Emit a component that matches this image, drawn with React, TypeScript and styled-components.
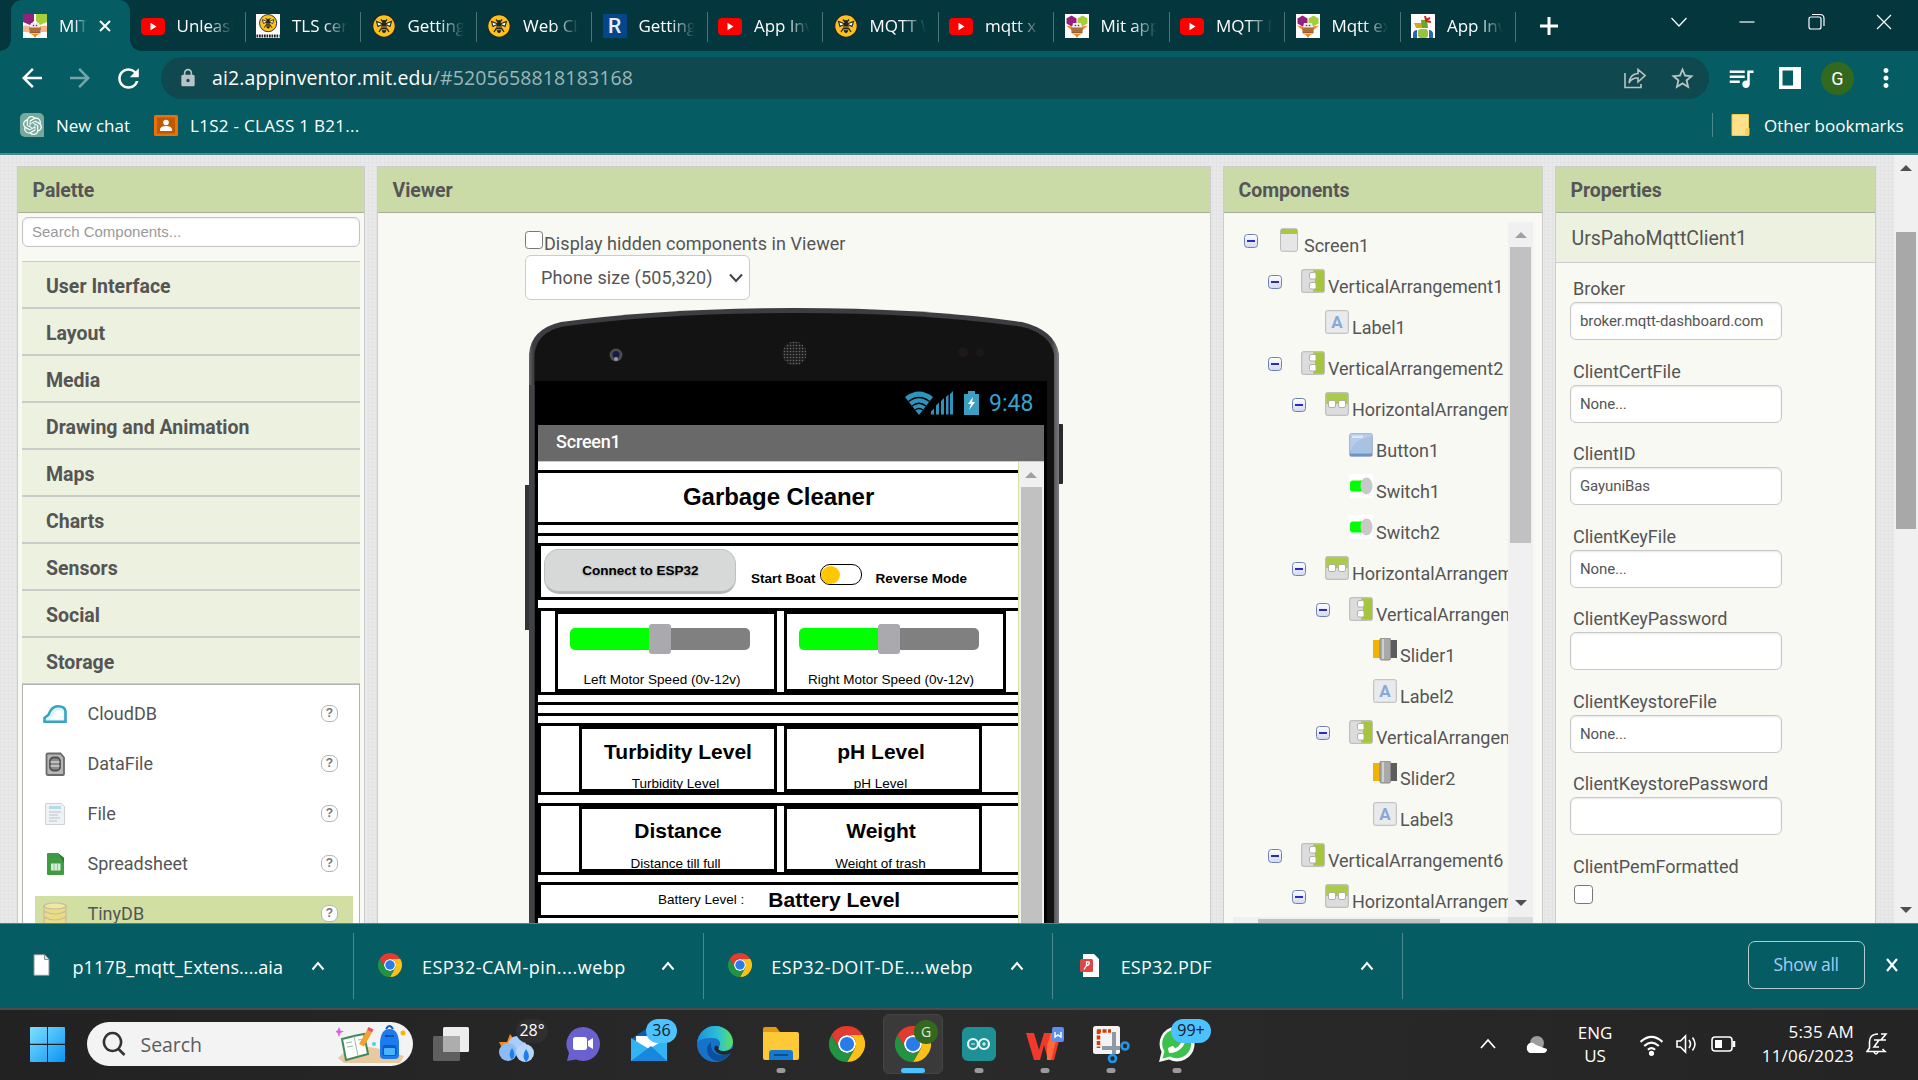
import React from 'react';
import styled, { createGlobalStyle, css } from 'styled-components';
import {
  MdArrowBack, MdArrowForward, MdRefresh, MdLock, MdStarBorder, MdQueueMusic, MdMoreVert,
} from 'react-icons/md';
import { SiOpenai } from 'react-icons/si';
import { FaPhoneAlt } from 'react-icons/fa';

const ui = `"Segoe UI", "Open Sans", "Noto Sans", sans-serif`;
const roboto = `Roboto, "Liberation Sans", sans-serif`;
const arial = `"Liberation Sans", Arial, sans-serif`;

const Global = createGlobalStyle`
  * { box-sizing: border-box; }
  body { margin: 0; overflow: hidden; background: #055c63; }
  svg { display: block; flex: none; }
`;

const Desktop = styled.div`
  width: 1918px; height: 1080px; overflow: hidden;
  display: flex; flex-direction: column; font-family: ${ui};
`;

/* ---------- browser chrome ---------- */
const TabStrip = styled.div`
  height: 51px; background: #03363d; display: flex; flex: none; padding-left: 11px;
`;
const ActiveTab = styled.div`
  position: relative; width: 118.6px; background: #055c63; border-radius: 11px 11px 0 0;
  display: flex; align-items: center; padding-left: 12px; color: #fff;
  &::before, &::after { content: ''; position: absolute; bottom: 0; width: 11px; height: 11px; }
  &::before { left: -11px; background: radial-gradient(circle at 0 0, transparent 10.5px, #055c63 11px); }
  &::after { right: -11px; background: radial-gradient(circle at 100% 0, transparent 10.5px, #055c63 11px); }
`;
const Tab = styled.div`
  position: relative; width: 115.5px; display: flex; align-items: center; padding-left: 11px; color: #fff; flex: none;
  &::after { content: ''; position: absolute; right: -0.5px; top: 12px; width: 1px; height: 30px; background: #4e7377; }
`;
const TabTitle = styled.span<{ $w: number }>`
  margin-left: 12px; width: ${p => p.$w}px; overflow: hidden; white-space: nowrap;
  font-size: 17px; line-height: 26px; letter-spacing: -0.1px;
  mask-image: linear-gradient(90deg, #000 55%, transparent 100%);
`;
const NewTab = styled.div`width: 66px; display: flex; align-items: center; justify-content: center;`;
const WindowButtons = styled.div`
  margin-left: auto; display: flex; height: 44px; align-items: center; gap: 44.5px; padding-right: 22px;
`;

const Toolbar = styled.div`
  height: 48px; background: #055c63; display: flex; align-items: flex-end; padding-left: 20px; flex: none; color: #fff;
`;
const ToolIcon = styled.div<{ $w?: number; $ml?: number; $dim?: boolean }>`
  width: ${p => p.$w ?? 24}px; height: 42px; margin-left: ${p => p.$ml ?? 0}px; flex: none;
  display: flex; align-items: center; justify-content: center; opacity: ${p => (p.$dim ? 0.45 : 1)};
`;
const Omnibox = styled.div`
  margin-left: 21px; width: 1548px; height: 42px; border-radius: 21px; background: #0f484f; flex: none;
  display: flex; align-items: center; padding: 0 15px 0 19px; color: #b9c3c6;
`;
const Url = styled.span`
  margin-left: 17px; font-size: 19.5px; line-height: 42px; color: #9db6b9; white-space: nowrap; margin-right: auto;
  letter-spacing: 0.12px;
  b { font-weight: 400; color: #fff; }
`;
const Avatar = styled.div`
  margin: 0 0 4px 20.5px; width: 33px; height: 33px; border-radius: 50%; background: #33691e; flex: none;
  display: flex; align-items: center; justify-content: center; font: 18px/1 ${roboto};
`;
const Bookmarks = styled.div`
  height: 56px; background: #055c63; border-bottom: 2px solid #4a888c; flex: none; color: #fff;
  display: flex; align-items: center; padding: 0 0 2px 20px;
`;
const BookmarkText = styled.span<{ $ml: number; $mr?: number; $ls?: number }>`
  margin-left: ${p => p.$ml}px; margin-right: ${p => p.$mr ?? 0}px; font-size: 17px; white-space: nowrap;
  letter-spacing: ${p => p.$ls ?? 0}px;
`;
const ChatTile = styled.div`
  width: 24px; height: 24px; background: #75a99c; border-radius: 5px 5px 0 5px; display: flex; align-items: center; justify-content: center;
`;
const OtherBookmarks = styled.div`
  margin-left: auto; height: 24px; border-left: 1px solid #4a888c; width: 206px; display: flex; align-items: center; padding-left: 18px;
`;

/* ---------- page ---------- */
const Page = styled.div`
  height: 768px; flex: none; display: flex; overflow: hidden; background-color: #e9e9e9;
  background-image:
    repeating-linear-gradient(0deg, rgba(0,0,0,.022) 0 1px, transparent 1px 4px),
    repeating-linear-gradient(90deg, rgba(0,0,0,.022) 0 1px, transparent 1px 4px);
`;
const Columns = styled.div`
  flex: 1; display: flex; gap: 12px; padding: 11px 0 0 17px;
`;
const Panel = styled.section<{ $w: number }>`
  width: ${p => p.$w}px; height: 800px; flex: none; background: #f8f9f3; border: 1px solid #ccc;
  display: flex; flex-direction: column; font-family: ${roboto}; color: #555;
`;
const PanelHeader = styled.h2`
  margin: 0; height: 46px; flex: none; background: #cbdba8; border-bottom: 1px solid #a9ae9c; padding: 1px 0 0 14.5px;
  font-size: 19.5px; font-weight: 700; line-height: 46px; letter-spacing: -0.07px;
`;
const SearchBox = styled.div`
  margin: 4px 4px 13.5px; height: 30px; border: 1px solid #c4c4c4; border-radius: 6px; background: #fff; flex: none;
  box-shadow: inset 0 1px 2px rgba(0,0,0,.08); font: 15px/27px ${arial}; color: #999; padding-left: 9px;
`;
const Categories = styled.div`margin: 0 4px; border-top: 1px solid #ccc; flex: none;`;
const Category = styled.div`
  height: 47px; background: #edf1df; border-bottom: 2px solid #cacccb; padding-left: 24px;
  font-size: 19.5px; font-weight: 700; line-height: 49px;
`;
const Drawer = styled.div`
  margin: -1px 4px 0; flex: 1; background: #fff; border: 1px solid #b4b4b4; padding: 11px 6px 0 12px;
`;
const DrawerItem = styled.div<{ $on?: boolean }>`
  height: 36px; margin-bottom: 14px; display: flex; align-items: center; padding: 0 15px 0 8px; font-size: 18px;
  ${p => p.$on && css`background: #d2dfa2;`}
  span { margin-left: 20.5px; margin-right: auto; }
`;
const Help = styled.i`
  width: 17px; height: 17px; border: 1.5px solid #b5b5b5; border-radius: 7px; background: #fff; font: bold 12px/14px ${arial};
  color: #777; text-align: center;
`;

/* ---------- viewer ---------- */
const ViewerBody = styled.div`padding-left: 147px; flex: 1;`;
const HiddenToggle = styled.label`
  height: 42px; padding-top: 18px; display: flex; font-size: 18px; line-height: 25px; gap: 1px; white-space: nowrap;
  span { letter-spacing: 0.06px; }
`;
const Box = styled.i`
  width: 18px; height: 18px; border: 1.5px solid #767676; border-radius: 3.5px; background: #fff; flex: none;
`;
const SizeSelect = styled.div`
  width: 225px; height: 45px; border: 1px solid #ccc; border-radius: 6px; background: #fff; display: flex; align-items: center;
  font-size: 18px; padding: 0 5px 0 15px; justify-content: space-between; letter-spacing: 0.15px;
`;
const Phone = styled.div`
  position: relative; margin-top: 8px; width: 538px; height: 640px; padding: 73px 0 0 10px;
`;
const PhoneBody = styled.svg`position: absolute; left: 0; top: 0;`;
const StatusBar = styled.div`
  position: relative; width: 512px; height: 44px; background: #000; display: flex; align-items: center; color: #33a3cd;
  padding: 0 0 0 370px; font-size: 23px;
`;
const Clock = styled.span`margin-left: 10px; line-height: 44px; padding-top: 1px;`;
const Glass = styled.div`position: relative; margin-left: 3px; width: 506px; background: #fff;`;
const AppTitle = styled.div`
  height: 37px; background: #696969; border-bottom: 1px solid #ccc; color: #fff; font-size: 18px; font-weight: 500;
  line-height: 34px; padding-left: 18px; letter-spacing: -0.2px;
`;
const GlassBody = styled.div`display: flex; height: 500px;`;
const AppScreen = styled.div`
  width: 480.5px; padding-top: 8px; font-family: ${arial}; color: #000; display: flex; flex-direction: column;
  border-right: 1px solid #d4dfa8;
`;
const AppHeading = styled.div`
  height: 55px; border: solid #000; border-width: 3px 0; font-size: 24px; font-weight: 700; line-height: 47px;
  padding-left: 145px; margin-bottom: 8px; flex: none; letter-spacing: -0.06px;
`;
const Rule = styled.div<{ $after: number }>`height: 3px; background: #000; margin-bottom: ${p => p.$after}px; flex: none;`;
const AppRow = styled.div<{ $h: number; $after: number; $pad: number; $gap?: number }>`
  height: ${p => p.$h}px; margin-bottom: ${p => p.$after}px; border: solid #000; border-width: 3px 0 3px 3px; flex: none;
  display: flex; padding-left: ${p => p.$pad}px; gap: ${p => p.$gap ?? 0}px;
`;
const ConnectButton = styled.div`
  width: 192px; height: 45px; margin-top: 3px; border-radius: 15px; background: #d6d9d8; border: 1px solid #bfc1c0; border-bottom: 3px solid #b5b7b6;
  font-size: 13.5px; font-weight: 700; text-align: center; line-height: 41px; text-shadow: 0 1px 2px rgba(0,0,0,.25); padding-left: 1px;
`;
const SwitchLabel = styled.span<{ $ml: number }>`
  margin-left: ${p => p.$ml}px; font-size: 13.5px; font-weight: 700; line-height: 16px; margin-top: 25px; white-space: nowrap;
`;
const Toggle = styled.div`
  width: 42px; height: 21px; margin: 18px 0 0 4px; border: 1.5px solid #000; border-radius: 10px; padding: 0.5px;
  &::before { content: ''; display: block; width: 19px; height: 18px; border-radius: 50%; background: #ffc700; }
`;
const Cell = styled.div<{ $w: number }>`
  width: ${p => p.$w}px; border: 3px solid #000; overflow: hidden; flex: none; display: flex; flex-direction: column; align-items: center;
`;
const Track = styled.div`
  margin: 14px 30px 0 12px; align-self: flex-start; width: 180px; height: 22px; border-radius: 5px; flex: none;
  background: linear-gradient(90deg, #0f0 45%, #808080 45%); display: flex; align-items: center; padding-left: 79px;
  &::before { content: ''; width: 22px; height: 30px; flex: none; border-radius: 3px; background: #a9a9ae; }
`;
const SmallText = styled.span<{ $mt: number; $shift?: number }>`
  font-size: 13.5px; line-height: 16px; margin-top: ${p => p.$mt}px; white-space: nowrap; padding-right: ${p => p.$shift ?? 0}px;
`;
const BigText = styled.span<{ $mt: number; $shift?: number }>`
  font-size: 21px; line-height: 24px; font-weight: 700; margin-top: ${p => p.$mt}px; white-space: nowrap; padding-right: ${p => p.$shift ?? 0}px;
`;

/* ---------- scroll bars ---------- */
const Scroll = styled.div<{ $w: number; $thumb: number; $color: string; $tw: number }>`
  width: ${p => p.$w}px; background: #f0f0f0; display: flex; flex-direction: column; align-items: center; flex: none;
  i { width: ${p => p.$tw}px; height: ${p => p.$thumb}px; background: ${p => p.$color}; flex: none; }
`;
const Arrow = styled.b<{ $h: number; $pt: number; $c: string; $down?: boolean }>`
  height: ${p => p.$h}px; padding-top: ${p => p.$pt}px; flex: none;
  &::before {
    content: ''; display: block; border: 6px solid transparent;
    ${p => (p.$down ? `border-top-color: ${p.$c}; border-bottom: 0;` : `border-bottom-color: ${p.$c}; border-top: 0;`)}
  }
`;
const Spring = styled.span`flex: 1;`;

/* ---------- component tree ---------- */
const TreeFrame = styled.div`margin: 9px 0 0 9px; height: 710px; flex: none; display: flex; flex-direction: column;`;
const TreeTop = styled.div`display: flex; height: 695px; flex: none;`;
const Tree = styled.div`width: 275px; overflow: hidden; padding-top: 6px;`;
const TreeRow = styled.div<{ $level: number }>`
  height: 41px; padding-left: ${p => 11 + p.$level * 24}px; display: flex; white-space: nowrap; font-size: 18px;
`;
const Minus = styled.div<{ $hide: boolean }>`
  width: 14px; height: 14px; margin: 6px 19px 0 0; border: 1.5px solid #6d80bd; border-radius: 3.5px; flex: none;
  background: linear-gradient(#fff, #d5d9ec); visibility: ${p => (p.$hide ? 'hidden' : 'visible')};
  &::before { content: ''; display: block; margin: 5px 2px 0; height: 2px; background: #2a2ac8; }
`;
const TreeName = styled.span`margin-left: 3px; line-height: 21px; padding-top: 7px;`;
const HScroll = styled.div`
  display: flex; height: 25px; width: 300px; background: linear-gradient(90deg, #f0f0f0 275px, #dcdcdc 275px); padding: 2px 0 2px 25px;
  i { width: 182px; background: #c1c1c1; }
`;

/* ---------- properties ---------- */
const Selected = styled.div`
  height: 50px; background: #edf1df; border-bottom: 1px solid #ccc; font-size: 19.5px; line-height: 51px; padding-left: 15.5px; flex: none;
`;
const Fields = styled.div`padding: 15px 0 0 14px;`;
const Field = styled.div`height: 82.5px;`;
const FieldLabel = styled.div`font-size: 18px; line-height: 22px; height: 24px; padding-left: 3px;`;
const Input = styled.div`
  width: 212px; height: 38px; border: 1px solid #c8c8c8; border-radius: 6px; background: #fff; font-size: 15px; line-height: 36px;
  padding-left: 9px; box-shadow: inset 0 1px 2px rgba(0,0,0,.1); letter-spacing: -0.1px;
`;
const PemBox = styled(Box)`display: block; margin: 5px 0 0 4px; width: 19px; height: 19px;`;

/* ---------- downloads shelf ---------- */
const Shelf = styled.div`
  height: 85px; flex: none; background: #055c63; border-top: 1px solid #4a888c; display: flex; color: #fff; padding-top: 9px; padding-left: 5px;
`;
const Download = styled.div`
  width: 349.4px; height: 66px; border-right: 1px solid #4a888c; display: flex; align-items: center; padding: 0 28px 0 24px; flex: none;
  font-size: 18px; white-space: nowrap;
`;
const FileSlot = styled.div`width: 24px; display: flex; justify-content: center; flex: none; margin-bottom: 2px;`;
const FileName = styled.span<{ $ls: number }>`margin: 1px auto 0 19.5px; letter-spacing: ${p => p.$ls}px;`;
const ShowAll = styled.div`
  margin: 8px 0 0 345px; width: 117px; height: 48px; border: 1px solid #b6cbd0; border-radius: 7px; color: #a6ccf8;
  font-size: 17.5px; font-weight: 500; line-height: 45px; text-align: center; letter-spacing: -0.3px; margin-right: 20px;
`;

/* ---------- taskbar ---------- */
const Taskbar = styled.div`
  flex: none; height: 72px; background: linear-gradient(90deg, #222 0, #2a2a2a 50%, #242424 100%); border-top: 2px solid #4b4b4b; display: flex; color: #fff;
  align-items: center; padding: 0 30px 2px 30px;
`;
const SearchPill = styled.div`
  margin: 0 8px 0 22px; width: 326px; height: 44px; border-radius: 22px; background: #f3f3f3; color: #5c5c5c; display: flex; align-items: center;
  padding: 0 5px 0 15px; font-size: 19.5px; flex: none;
  span { margin: 1px auto 0 14.5px; letter-spacing: -0.05px; }
`;
const TaskButton = styled.div<{ $active?: boolean }>`
  position: relative; width: 60px; height: 60px; margin-right: 6px; flex: none; border-radius: 6px;
  display: flex; align-items: center; justify-content: center;
  ${p => p.$active && css`background: #3a3a3a; border: 1px solid #454545;`}
`;
const Running = styled.i<{ $active?: boolean }>`
  position: absolute; bottom: ${p => (p.$active ? 0 : 1)}px; left: 50%; transform: translateX(-50%);
  width: ${p => (p.$active ? 24 : 9)}px; height: 5px; border-radius: 3px; background: ${p => (p.$active ? '#4cc2ff' : '#9a9a9a')};
`;
const Badge = styled.span<{ $bg: string; $fg: string; $l: number; $w: number; $s?: number }>`
  position: absolute; top: 5px; left: ${p => p.$l}px; width: ${p => p.$w}px; height: 24px; border-radius: 12px;
  background: ${p => p.$bg}; color: ${p => p.$fg}; font-size: ${p => p.$s ?? 16}px; line-height: 23px; text-align: center;
`;
const Tray = styled.div`
  margin-left: auto; display: flex; align-items: center; font-size: 17px; line-height: 23px;
`;
const Lang = styled.div`width: 44px; text-align: center; margin: 0 22px 0 23px; letter-spacing: -0.1px;`;
const DateTime = styled.div`
  width: 100px; text-align: right; margin-left: 18px; margin-right: 12px; letter-spacing: 0.2px; white-space: nowrap; line-height: 24px;
`;
const Cloud = styled.svg`margin-left: 27px;`;
const Volume = styled.div`margin: 0 5px 0 6px;`;

/* ---------- drawings ---------- */
const YouTube = () => (
  <svg width="24" height="24" viewBox="0 0 24 24"><rect y="4" width="24" height="17" rx="4" fill="#f00" /><path d="M9.5 8.8v7.4l6-3.7z" fill="#fff" /></svg>
);
const BeeMark = () => (
  <g>
    <circle cx="12" cy="12" r="11.3" fill="#fbc21b" stroke="#20242a" strokeWidth="1.2" />
    <path d="M9 5.500l2 2.500M15 5.500l-2 2.500M7 18l2.500-4M17 18l-2.500-4" stroke="#20242a" strokeWidth="1.300" fill="none" />
    <path d="M11 10 4.500 7.500l1.500 5zM13 10l6.500-2.500-1.500 5z" fill="#fff" stroke="#20242a" strokeWidth="1.100" />
    <ellipse cx="12" cy="13.500" rx="2.600" ry="5.500" fill="#20242a" /><circle cx="12" cy="8" r="1.900" fill="#20242a" />
    <path d="M9.800 13h4.400M10 15.700h4" stroke="#fbc21b" strokeWidth=".8" />
  </g>
);
const Hive = () => <svg width="24" height="24" viewBox="0 0 24 24"><BeeMark /></svg>;
const HiveWhite = () => (
  <svg width="24" height="24" viewBox="0 0 24 24">
    <rect width="24" height="24" fill="#fff" />
    <g transform="translate(3 0) scale(.76)"><BeeMark /></g>
    <path d="M.5 22h23" stroke="#222" strokeWidth="3" strokeDasharray="1.7 .8" />
  </svg>
);
const Inventor = ({ orange }: { orange?: boolean }) => (
  <svg width="24" height="24" viewBox="0 0 24 24">
    <rect width="24" height="24" fill="#fff" />
    <path d={orange ? 'M0 0h11v7l-4 4-7-3z' : 'M1.500 4.500 6.500 1.500l5 3v5l-5 3-5-3z'} fill="#93227f" />
    <path d={orange ? 'M13 0h11v8l-7 3-4-4z' : 'M12.500 4.500l5-3 5 3v5l-5 3-5-3z'} fill="#a6ce39" />
    <path d="M1 11.500l6 1v4zM23 11.500l-6 1v4z" fill="#f58a33" />
    {orange && <path d="M0 12h6v6H0zM18 12h6v6h-6z" fill="#f9b586" />}
    <path d="M8 9h8l1 4.500H7z" fill="#f1ebee" /><path d="M6.500 13.500h11v5.500h-11z" fill="#9a5b2b" />
    <path d="M6.500 15h11M6.500 17h11" stroke="#c98d51" strokeWidth=".8" />
    <path d="M6 19.500h12l-4 1.500-2 3-2-3z" fill="#f58220" />
    <circle cx="10.500" cy="11.500" r=".8" fill="#444" /><circle cx="13.500" cy="11.500" r=".8" fill="#444" />
  </svg>
);
const RTile = styled.div`
  width: 24px; height: 24px; background: #04468c; color: #e8eef5; font: 500 21px/25px ${roboto}; text-align: center;
`;
const Robot = () => (
  <svg width="24" height="24" viewBox="0 0 24 24">
    <rect width="24" height="24" fill="#fff" />
    <path d="M3 9h9v5H5z" fill="#d9a514" /><path d="M10 6h6l1 8h-6z" fill="#6aa52c" />
    <path d="M14 2l1 4 4-2M15 7l5 1" stroke="#d0202a" strokeWidth="2" fill="none" />
    <rect x="7" y="15" width="10" height="9" rx="3" fill="#97c23c" /><path d="M2 24v-5q1-3 4-3v8zM22 24v-5q-1-3-4-3v8z" fill="#2a62b5" />
  </svg>
);
const Chrome = ({ size }: { size: number }) => (
  <svg width={size} height={size} viewBox="0 0 48 48">
    <circle cx="24" cy="24" r="12" fill="#fff" />
    <path fill="#e33b2e" d="M24,12H44.7812a23.9939,23.9939,0,0,0-41.5639.0029L13.6079,30l.0093-.0024A11.9852,11.9852,0,0,1,24,12Z" />
    <path fill="#fbc116" d="M34.3913,30.0029,24.0007,48A23.994,23.994,0,0,0,44.78,12.0031H23.9989l-.0025.0093A11.985,11.985,0,0,1,34.3913,30.0029Z" />
    <path fill="#229342" d="M13.6086,30.0031,3.218,12.006A23.994,23.994,0,0,0,24.0025,48L34.3931,30.0029l-.0067-.0068a11.9852,11.9852,0,0,1-20.7778.007Z" />
    <circle cx="24" cy="24" r="9.5" fill="#2a7bea" />
  </svg>
);
const Stroke = ({ w, h, d, s = 1.5, c = '#fff' }: { w: number; h: number; d: string; s?: number; c?: string }) => (
  <svg width={w} height={h} viewBox={`0 0 ${w} ${h}`} fill="none" stroke={c} strokeWidth={s}><path d={d} /></svg>
);

const drawerIcons: Record<string, React.ReactNode> = {
  CloudDB: <g><path d="M1.500 19.800v-4l4-3q3-8.500 9.500-8.500 7 0 7.500 5v10.500z" fill="#d8f6fd" stroke="#3aa3c4" strokeWidth="2.600" /><path d="M7 17.500q0-3 3-3 1-6 6-6 4 0 4.500 4v5z" fill="#fff" /></g>,
  DataFile: <g stroke="#6a6a6a" strokeWidth="1.800"><path d="M3.500 3q0-1.500 1.500-1.500h12.500l3.500 4V22q0 1-1 1H5q-1.500 0-1.500-1.500z" fill="#b5b5b5" /><rect x="7" y="5.500" width="10" height="13" rx="3.500" fill="#8c8c8c" stroke="#505050" /><path d="M7.500 10h9M7.500 14h9" stroke="#cfcfcf" strokeWidth="1.300" /></g>,
  File: <g><path d="M2.500 1.500h16l3 3v18h-19z" fill="#eef2f5" stroke="#ccd2d5" /><path d="M6 5.500h12" stroke="#b5dbe6" strokeWidth="3" /><path d="M6 10h12M6 13h9M6 16h11M6 19h8" stroke="#d3dade" strokeWidth="2" /></g>,
  Spreadsheet: <g><path d="M4 1.500q0-.5 1-.5h10l6 5v16q0 1-1 1H5q-1 0-1-1z" fill="#3f9c42" /><path d="M15 1l6 5v5z" fill="#2a7a2e" /><rect x="8" y="11.500" width="9.500" height="7" fill="#d6ecd6" /><path d="M11 11.500v7M14.500 11.500v7" stroke="#8fc890" /></g>,
  TinyDB: <g fill="#e8dd85" stroke="#c9bb9c" strokeWidth="1.2"><path d="M1 16v5q11 6 22 0v-5z" /><path d="M1 10v5q11 6 22 0v-5z" /><path d="M1 4v5q11 6 22 0V4z" /><ellipse cx="12" cy="4" rx="11" ry="3" fill="#efe7a5" /></g>,
};

type Kind = 'screen' | 'v' | 'h' | 'label' | 'button' | 'switch' | 'slider';
const treeIcons: Record<Kind, React.ReactNode> = {
  screen: <g><rect x="3.500" y=".7" width="17" height="22.600" rx="2" fill="#e6e6e6" stroke="#bbb" /><path d="M4 1h16v5H4z" fill="#a9c93d" /></g>,
  v: <g><rect x=".7" y=".7" width="22.600" height="22.600" rx="1.500" fill="#dcdcdc" stroke="#b3b3b3" /><path d="M12 1.200h11v21.600H12l2-11z" fill="#a5c63b" /><g fill="#fff" stroke="#b0b0a8"><rect x="8.500" y="3.500" width="6.500" height="6.500" rx="1.500" /><rect x="8.500" y="13.500" width="6.500" height="6.500" rx="1.500" /></g></g>,
  h: <g><rect x=".7" y=".7" width="22.600" height="22.600" rx="1.500" fill="#dcdcdc" stroke="#b3b3b3" /><path d="M1.200 1.200h21.600V12H1.200z" fill="#a9cb45" /><g fill="#fff" stroke="#b0b0a8"><rect x="3.500" y="8.500" width="7" height="7" rx="1.500" /><rect x="13.500" y="8.500" width="7" height="7" rx="1.500" /></g></g>,
  label: <g><rect x=".7" y=".7" width="22.600" height="22.600" rx="1.500" fill="#e9eaec" stroke="#b9b9b9" /><text x="12" y="18" fontSize="17" fontWeight="700" textAnchor="middle" fill="#86a9da" fontFamily="Roboto">A</text></g>,
  button: <g><rect x=".7" y=".7" width="22.600" height="22.600" rx="1.500" fill="#a8c2e4" stroke="#9fadc4" /><path d="M1.200 1.200h21.600v2Q6 6 2 17h-.8z" fill="#b7cdea" /><path d="M3 2.500h11v2.500H3z" fill="#dce8f6" /><path d="M1 21.800h22" stroke="#6f93c8" strokeWidth="2.600" /></g>,
  switch: <g><rect width="24" height="24" fill="#fff" /><rect x="1" y="6.500" width="16" height="11" rx="3" fill="#0f0" /><ellipse cx="17.500" cy="12" rx="6" ry="8.500" fill="#c9c9c9" /></g>,
  slider: <g><path d="M0 2h8v18H0z" fill="#f0b400" /><path d="M16 2h8v18h-8z" fill="#5d5d5d" /><rect x="7" y="0" width="10.500" height="22" rx="1.500" fill="#a9a9a9" stroke="#888" /><path d="M10 1v20" stroke="#d0d0d0" strokeWidth="2" /></g>,
};
const tree: [string, number, Kind][] = [
  ['Screen1', 0, 'screen'], ['VerticalArrangement1', 1, 'v'], ['Label1', 2, 'label'], ['VerticalArrangement2', 1, 'v'],
  ['HorizontalArrangement1', 2, 'h'], ['Button1', 3, 'button'], ['Switch1', 3, 'switch'], ['Switch2', 3, 'switch'],
  ['HorizontalArrangement2', 2, 'h'], ['VerticalArrangement3', 3, 'v'], ['Slider1', 4, 'slider'], ['Label2', 4, 'label'],
  ['VerticalArrangement4', 3, 'v'], ['Slider2', 4, 'slider'], ['Label3', 4, 'label'], ['VerticalArrangement6', 1, 'v'],
  ['HorizontalArrangement3', 2, 'h'],
];
const tabs: [React.ReactNode, string][] = [
  [<YouTube />, 'Unleash'], [<HiveWhite />, 'TLS cert'], [<Hive />, 'Getting S'], [<Hive />, 'Web Clie'], [<RTile>R</RTile>, 'Getting S'],
  [<YouTube />, 'App Inve'], [<Hive />, 'MQTT W'], [<YouTube />, 'mqtt x'], [<Inventor />, 'Mit app i'], [<YouTube />, 'MQTT P'],
  [<Inventor />, 'Mqtt ext'], [<Robot />, 'App Inve'],
];
const categories = ['User Interface', 'Layout', 'Media', 'Drawing and Animation', 'Maps', 'Charts', 'Sensors', 'Social', 'Storage'];
const fields: [string, string][] = [
  ['Broker', 'broker.mqtt-dashboard.com'], ['ClientCertFile', 'None...'], ['ClientID', 'GayuniBas'], ['ClientKeyFile', 'None...'],
  ['ClientKeyPassword', ''], ['ClientKeystoreFile', 'None...'], ['ClientKeystorePassword', ''],
];

const PhoneFrame = () => (
  <PhoneBody width="538" height="640" viewBox="0 0 538 640">
    <defs>
      <pattern id="mesh" width="3" height="3" patternUnits="userSpaceOnUse"><circle cx="1.500" cy="1.500" r=".8" fill="#666" /></pattern>
      <linearGradient id="rim" x1="0" x2="1"><stop offset="0" stopColor="#66676b" /><stop offset=".008" stopColor="#3c3d40" /><stop offset=".985" stopColor="#3c3d40" /><stop offset="1" stopColor="#7a7b80" /></linearGradient>
    </defs>
    <rect x="0" y="177" width="6" height="145" fill="#333437" />
    <rect x="532" y="116" width="6" height="60" rx="1" fill="#2a2a2c" />
    <path d="M4 640V46Q6 21 36 14Q140 0 269 0Q400 0 497 14Q530 22 534 46V640z" fill="url(#rim)" />
    <path d="M9.500 640V46Q12 24 38 18.500Q140 5 269 5Q400 5 495 18.500Q525 25 529 46V640z" fill="#131313" />
    <rect x="4" y="77" width="5.500" height="563" fill="#414246" />
    <rect x="10" y="73" width="3" height="567" fill="#000" /><rect x="519" y="73" width="3" height="567" fill="#000" />
    <circle cx="91" cy="47" r="6.500" fill="#4b4b50" /><circle cx="91" cy="46.500" r="3.500" fill="#191948" /><circle cx="91" cy="51" r="2" fill="#999" />
    <circle cx="269.500" cy="45.500" r="12" fill="#1d1d1d" /><circle cx="269.500" cy="45.500" r="12" fill="url(#mesh)" />
    <circle cx="438" cy="44.500" r="5" fill="#1e1819" /><circle cx="455" cy="44.500" r="4" fill="#1c1819" />
  </PhoneBody>
);

const Wifi = ({ size, c }: { size: number; c: string }) => (
  <svg width={size} height={size} viewBox="0 0 24 24" fill="none" stroke={c} strokeWidth="2">
    <path d="M1.500 9.500q10.500-9.500 21 0M5 13.500q7-6.500 14 0M8.500 17q3.500-3 7 0" /><circle cx="12" cy="20.500" r="1.500" fill={c} />
  </svg>
);

const Level = ({ title, sub, top, shift = 0 }: { title: string; sub: string; top: number; shift?: number }) => (
  <Cell $w={198}><BigText $mt={top} $shift={shift}>{title}</BigText><SmallText $mt={23 - top} $shift={5}>{sub}</SmallText></Cell>
);
const Motor = ({ label }: { label: string }) => (
  <Cell $w={222}><Track /><SmallText $mt={22} $shift={8}>{label}</SmallText></Cell>
);

const caret = <Stroke w={14} h={10} d="M1.500 8.500 7 2l5.500 6.500" s={2} />;

export default function App() {
  return (
    <Desktop>
      <Global />
      <TabStrip>
        <ActiveTab>
          <Inventor orange />
          <TabTitle $w={28}>MIT A</TabTitle>
          <Stroke w={36} h={14} d="M13 2l10 10M23 2 13 12" s={2} />
        </ActiveTab>
        {tabs.map(([icon, name], i) => <Tab key={i}>{icon}<TabTitle $w={56}>{name}</TabTitle></Tab>)}
        <NewTab><Stroke w={18} h={18} d="M9 0v18M0 9h18" s={3} /></NewTab>
        <WindowButtons>
          <Stroke w={24} h={16} d="M4.500 4 12 12l7.500-8" s={1.2} />
          <Stroke w={24} h={16} d="M4.500 8h15" s={1.2} />
          <Stroke w={24} h={18} d="M5 6q0-2 2-2h8q2 0 2 2v8q0 2-2 2H7q-2 0-2-2zM8 1.500h8q4 0 4 4V13" s={1.2} />
          <Stroke w={24} h={18} d="M5 2l14 14M19 2 5 16" s={1.2} />
        </WindowButtons>
      </TabStrip>
      <Toolbar>
        <ToolIcon><MdArrowBack size={30} /></ToolIcon>
        <ToolIcon $ml={24} $dim><MdArrowForward size={30} /></ToolIcon>
        <ToolIcon $ml={24}><MdRefresh size={31} /></ToolIcon>
        <Omnibox>
          <ToolIcon $w={15}><MdLock size={20} /></ToolIcon>
          <Url><b>ai2.appinventor.mit.edu</b>/#5205658818183168</Url>
          <Stroke w={22} h={22} d="M1 6v14.500h16V17M5 16q1-9 9-9.500V2.500l7 6-7 6.500v-4q-6-.5-9 5z" s={1.6} c="#b9c3c6" />
          <ToolIcon $ml={24}><MdStarBorder size={27} /></ToolIcon>
        </Omnibox>
        <ToolIcon $ml={20}><MdQueueMusic size={30} /></ToolIcon>
        <ToolIcon $ml={25.5} $w={22}>
          <svg width="22" height="22" viewBox="0 0 22 22"><path d="M0 0h22v22H0zM3.500 3.500v15H14v-15z" fill="#fff" fillRule="evenodd" /></svg>
        </ToolIcon>
        <Avatar>G</Avatar>
        <ToolIcon $ml={19.5}><MdMoreVert size={30} /></ToolIcon>
      </Toolbar>
      <Bookmarks>
        <ChatTile><SiOpenai size={19} /></ChatTile>
        <BookmarkText $ml={12} $mr={24}>New chat</BookmarkText>
        <svg width="24" height="21" viewBox="0 0 24 21"><rect width="24" height="21" rx="1.500" fill="#e8710a" /><rect x="3" y="2.500" width="18" height="16" fill="#bf5a02" /><circle cx="12" cy="7.500" r="2.800" fill="#fff" /><path d="M6 16v-2q1-3 6-3t6 3v2z" fill="#fff" /></svg>
        <BookmarkText $ml={12} $ls={0.3}>L1S2 - CLASS 1 B21...</BookmarkText>
        <OtherBookmarks>
          <svg width="20" height="22" viewBox="0 0 20 22"><path d="M1 .5h16.500v21H1z" fill="#ffe08a" stroke="#f5c84b" /><path d="M14 15.500q0-1.500 1.500-1.500h3v6.500q0 1-1 1H14z" fill="#f9cf55" /></svg>
          <BookmarkText $ml={13}>Other bookmarks</BookmarkText>
        </OtherBookmarks>
      </Bookmarks>

      <Page>
        <Columns>
          <Panel $w={348}>
            <PanelHeader>Palette</PanelHeader>
            <SearchBox>Search Components...</SearchBox>
            <Categories>{categories.map(c => <Category key={c}>{c}</Category>)}</Categories>
            <Drawer>
              {Object.keys(drawerIcons).map(name => (
                <DrawerItem key={name} $on={name === 'TinyDB'}>
                  <svg width="24" height="24" viewBox="0 0 24 24">{drawerIcons[name]}</svg>
                  <span>{name}</span><Help>?</Help>
                </DrawerItem>
              ))}
            </Drawer>
          </Panel>

          <Panel $w={834}>
            <PanelHeader>Viewer</PanelHeader>
            <ViewerBody>
              <HiddenToggle><Box /><span>Display hidden components in Viewer</span></HiddenToggle>
              <SizeSelect>Phone size (505,320)<Stroke w={16} h={12} d="M2 2.500l6 6.500 6-6.500" s={2} c="#444" /></SizeSelect>
              <Phone>
                <PhoneFrame />
                <StatusBar>
                  <svg width="59" height="24" viewBox="0 0 59 24">
                    <path d="M0 6Q14-5 28 6L14 24z" fill="#2f94bd" />
                    <path d="M3.500 10.500q10.500-8 21 0M7 15q7-5.500 14 0M10 19q4-3 8 0" stroke="#000" strokeWidth="1.300" fill="none" />
                    <path d="M26 23.500v-3l3-3v6zM31 23.500v-9l3-3v12zM36 23.500V10l3-3v16.500zM41 23.500V6l2.500-2.500v20zM45 23.500V3l3-3v23.500z" fill="#2f94bd" />
                  </svg>
                  <svg width="15" height="24" viewBox="0 0 15 24"><path d="M0 3h4V0h7v3h4v21H0z" fill="#3a9ec5" /><path d="M9 6 4 13h3l-2 6 6-8H8z" fill="#fff" /></svg>
                  <Clock>9:48</Clock>
                </StatusBar>
                <Glass>
                  <AppTitle>Screen1</AppTitle>
                  <GlassBody>
                    <AppScreen>
                      <AppHeading>Garbage Cleaner</AppHeading>
                      <Rule $after={7} />
                      <AppRow $h={57} $after={8} $pad={3}>
                        <ConnectButton>Connect to ESP32</ConnectButton>
                        <SwitchLabel $ml={15}>Start Boat</SwitchLabel><Toggle />
                        <SwitchLabel $ml={14}>Reverse Mode</SwitchLabel>
                      </AppRow>
                      <AppRow $h={87} $after={7} $pad={14} $gap={7}>
                        <Motor label="Left Motor Speed (0v-12v)" /><Motor label="Right Motor Speed (0v-12v)" />
                      </AppRow>
                      <Rule $after={8} /><Rule $after={7} />
                      <AppRow $h={72} $after={8} $pad={38} $gap={7}>
                        <Level title="Turbidity Level" sub="Turbidity Level" top={11} /><Level title="pH Level" sub="pH Level" top={11} shift={4} />
                      </AppRow>
                      <AppRow $h={72} $after={7} $pad={38} $gap={7}>
                        <Level title="Distance" sub="Distance till full" top={10} /><Level title="Weight" sub="Weight of trash" top={10} shift={4} />
                      </AppRow>
                      <AppRow $h={36} $after={0} $pad={117} $gap={24}>
                        <SmallText $mt={7}>Battery Level :</SmallText><BigText $mt={3}>Battery Level</BigText>
                      </AppRow>
                    </AppScreen>
                    <Scroll $w={25.5} $tw={21} $thumb={480} $color="#c1c1c1"><Arrow $h={25} $pt={10} $c="#a0a0a0" /><i /></Scroll>
                  </GlassBody>
                </Glass>
              </Phone>
            </ViewerBody>
          </Panel>

          <Panel $w={320}>
            <PanelHeader>Components</PanelHeader>
            <TreeFrame>
              <TreeTop>
                <Tree>
                  {tree.map(([name, level, kind]) => (
                    <TreeRow key={name} $level={level}>
                      <Minus $hide={['label', 'button', 'switch', 'slider'].includes(kind)} />
                      <svg width="24" height="24" viewBox="0 0 24 24">{treeIcons[kind]}</svg>
                      <TreeName>{name}</TreeName>
                    </TreeRow>
                  ))}
                </Tree>
                <Scroll $w={25} $tw={21} $thumb={296} $color="#c1c1c1">
                  <Arrow $h={25} $pt={10} $c="#a0a0a0" /><i /><Spring /><Arrow $h={17} $pt={0} $c="#505050" $down />
                </Scroll>
              </TreeTop>
              <HScroll><i /></HScroll>
            </TreeFrame>
          </Panel>

          <Panel $w={321}>
            <PanelHeader>Properties</PanelHeader>
            <Selected>UrsPahoMqttClient1</Selected>
            <Fields>
              {fields.map(([label, value]) => <Field key={label}><FieldLabel>{label}</FieldLabel><Input>{value}</Input></Field>)}
              <FieldLabel>ClientPemFormatted</FieldLabel>
              <PemBox />
            </Fields>
          </Panel>
        </Columns>
        <Scroll $w={24} $tw={20} $thumb={297} $color="#a8a8a8">
          <Arrow $h={77} $pt={10} $c="#505050" /><i /><Spring /><Arrow $h={16} $pt={0} $c="#505050" $down />
        </Scroll>
      </Page>

      <Shelf>
        <Download>
          <FileSlot><svg width="17" height="22" viewBox="0 0 17 22"><path d="M1 .7h10.500L16 5.500v15.800H1z" fill="#fff" stroke="#8a9394" /><path d="M11.500.7v4.800H16" fill="#dfe3e3" stroke="#8a9394" /></svg></FileSlot>
          <FileName $ls={0.07}>p117B_mqtt_Extens....aia</FileName>{caret}
        </Download>
        <Download><FileSlot><Chrome size={24} /></FileSlot><FileName $ls={0.5}>ESP32-CAM-pin....webp</FileName>{caret}</Download>
        <Download><FileSlot><Chrome size={24} /></FileSlot><FileName $ls={0.42}>ESP32-DOIT-DE....webp</FileName>{caret}</Download>
        <Download>
          <FileSlot><svg width="19" height="23" viewBox="0 0 19 23"><path d="M3 0h11l5 5v18H3z" fill="#fff" /><rect y="5" width="13" height="13" rx="1.500" fill="#e04545" /><path d="M4 15.500l2.500-4V8H9q1 3-2.500 3.500" stroke="#fff" fill="none" strokeWidth="1.300" /></svg></FileSlot>
          <FileName $ls={0.2}>ESP32.PDF</FileName>{caret}
        </Download>
        <ShowAll>Show all</ShowAll>
        <Stroke w={14} h={64} d="M2 26l10 12M12 26 2 38" s={2.2} />
      </Shelf>

      <Taskbar>
        <svg width="35" height="35" viewBox="0 0 35 35">
          <defs><linearGradient id="win" x1="0" y1="0" x2="1" y2="1"><stop offset="0" stopColor="#7fe0ff" /><stop offset="1" stopColor="#0a94f5" /></linearGradient></defs>
          <path d="M1 0h16v16.700H0V1q0-1 1-1zM18 0h16q1 0 1 1v15.700H18zM0 18h17v17H1q-1 0-1-1zM18 18h17v16q0 1-1 1H18z" fill="url(#win)" />
        </svg>
        <SearchPill>
          <Stroke w={24} h={26} d="M10.500 2a8.500 9 0 1 0 .01 0zM16.500 18l6 6" s={2.6} c="#333" />
          <span>Search</span>
          <svg width="72" height="40" viewBox="0 0 72 40">
            <path d="M2 34Q14 20 40 24l28 8-4 7H8z" fill="#e9c9a0" />
            <path d="M6 15l12-3 10-2 4 20-22 6z" fill="#fff" stroke="#3f8a5c" strokeWidth="2" /><path d="M18 12l4 20M10 19l6-1M11 23l6-1M22 16l6-1" stroke="#9bb9a6" />
            <path d="M23 20 31 6l5 2.500-8 14z" fill="#f2a233" /><path d="M31 6l1.500-3 5 2.500-1.500 3z" fill="#e8506a" />
            <path d="M3 3l1.500 3.500 3.500 1-3.500 1.500L3 13 1.500 9-1 7.500l2.500-1z" fill="#e064e0" />
            <path d="M44 18Q45 5 53.500 5T63 18v13q0 4-4 4H48q-4 0-4-4z" fill="#1b7cf0" /><path d="M50 5q3.500-6 7 0" stroke="#1257b5" strokeWidth="2" fill="none" />
            <rect x="46.500" y="21" width="14" height="11" rx="2" fill="#1259c8" /><rect x="48" y="24" width="11" height="7" rx="1" fill="#49b5ff" /><path d="M49 12h9" stroke="#0b4ea5" strokeWidth="2" /><circle cx="67" cy="9" r="2.500" fill="#f7b500" /><circle cx="38" cy="20" r="2" fill="#4cd2e0" />
          </svg>
        </SearchPill>
        <TaskButton>
          <svg width="36" height="34" viewBox="0 0 36 34"><rect x="10" width="26" height="25" rx="1.500" fill="#ededed" /><rect y="9" width="27" height="25" rx="1.500" fill="#5f5f5f" /><rect x="10" y="9" width="17" height="16" fill="#adadad" /></svg>
        </TaskButton>
        <TaskButton>
          <svg width="38" height="40" viewBox="0 0 38 40"><path d="M1 18l8 0 3-8 6 8-4 6-9 2z" fill="#f28b1d" /><circle cx="19" cy="21" r="9" fill="#a9cdf8" /><circle cx="10" cy="28" r="9" fill="#8dbcf5" /><circle cx="27" cy="29" r="9" fill="#b9d6fa" /><path d="M14 24q5 7 0 12-5-5 0-12zM28 25q6 8 0 13-5-5 0-13z" fill="#1f7ee8" /></svg>
          <Badge $bg="#2f2f2f" $fg="#fff" $l={29} $w={32}>28°</Badge>
        </TaskButton>
        <TaskButton>
          <svg width="34" height="34" viewBox="0 0 34 34"><path d="M17 0a17 17 0 1 1-7 32.500L1 34l2-8A17 17 0 0 1 17 0z" fill="#6a60d0" /><rect x="7" y="10" width="14" height="13" rx="2.500" fill="#fff" /><path d="M22 14l5-3v11l-5-3z" fill="#fff" /></svg>
        </TaskButton>
        <TaskButton>
          <svg width="36" height="34" viewBox="0 0 36 34"><path d="M0 12 18 0l18 12v22H0z" fill="#0c5fae" /><path d="M5 9h26v14H5z" fill="#fff" /><path d="M0 11l18 11L36 11v23H0z" fill="#33b4f2" /><path d="M0 34l20-15 16 15z" fill="#1788dd" /></svg>
          <Badge $bg="#4cc2ff" $fg="#10202b" $l={27} $w={31}>36</Badge>
        </TaskButton>
        <TaskButton>
          <svg width="36" height="36" viewBox="0 0 36 36">
            <defs><linearGradient id="edge" x1="0" x2="1"><stop offset="0" stopColor="#1b8fe0" /><stop offset=".6" stopColor="#2cc3d2" /><stop offset="1" stopColor="#5fe05a" /></linearGradient></defs>
            <circle cx="18" cy="18" r="18" fill="#1673c9" /><path d="M0 17C2 6 9 0 18 0c11 0 18 8 18 16 0 6-5 9-9 9-5 0-7-2-5-4 3-4 0-9-6-9C8 12 2 13 0 17z" fill="url(#edge)" />
            <path d="M33 27q-5 3-11 2-9-2-8-13Q8 21 11 28q4 8 12 7 7-2 10-8z" fill="#0c4f9c" /><path d="M22 21q-2 3 3 4 6 1 11-3-1 4-3 5.500-8 3-13-1-5-4-1-7z" fill="#262626" />
          </svg>
        </TaskButton>
        <TaskButton>
          <svg width="36" height="34" viewBox="0 0 36 34"><path d="M0 2q0-2 2-2h11l4 5H0z" fill="#e09a10" /><path d="M0 5h34q2 0 2 2v24q0 2-2 2H2q-2 0-2-2z" fill="#fdc937" /><path d="M6 33v-7q0-3 3-3h18q3 0 3 3v7z" fill="#1679cf" /><path d="M11 28h14" stroke="#0c4d8a" strokeWidth="2" /></svg>
          <Running />
        </TaskButton>
        <TaskButton><Chrome size={36} /></TaskButton>
        <TaskButton $active>
          <Chrome size={36} /><Badge $bg="#33691e" $fg="#dfe8da" $l={30} $w={24} $s={14}>G</Badge><Running $active />
        </TaskButton>
        <TaskButton>
          <svg width="34" height="34" viewBox="0 0 34 34"><rect width="34" height="34" rx="6" fill="#1d9196" /><g fill="none" stroke="#e9f7f7" strokeWidth="2.200"><circle cx="11" cy="17" r="5" /><circle cx="22" cy="17" r="5" /></g><path d="M9 17h4M20 17h4M22 15v4" stroke="#e9f7f7" strokeWidth="1.200" /></svg>
          <Running />
        </TaskButton>
        <TaskButton>
          <svg width="40" height="34" viewBox="0 0 40 34"><path d="M1 6h8l5 17 5-17h7l3 13 3-13h4l-7 27h-6l-4-15-4 15H9z" fill="#f0392b" /><path d="M22 18l4-12h7l-7 27h-4z" fill="#ff6a3a" /><rect x="27" y="0" width="12" height="15" rx="2" fill="#5a8ff0" /><path d="M30 5v5l3-2 3 2V5" stroke="#fff" fill="none" strokeWidth="1.500" /></svg>
          <Running />
        </TaskButton>
        <TaskButton>
          <svg width="37" height="37" viewBox="0 0 37 37"><rect x="0" y="0" width="27" height="28" rx="2.500" fill="#f3f3f3" /><path d="M4 5h14M5.500 4v18" stroke="#d83b01" strokeWidth="3.500" strokeDasharray="4 1.500" /><path d="M21 6v22M9 22h18" stroke="#8d9aa3" strokeWidth="4" /><g fill="none" stroke="#2196e8" strokeWidth="2.600"><circle cx="32" cy="20" r="3.500" /><circle cx="19.500" cy="32.500" r="3.500" /></g></svg>
          <Running />
        </TaskButton>
        <TaskButton>
          <svg width="36" height="36" viewBox="0 0 36 36"><path d="M0 36l2.500-10A17.500 17.500 0 1 1 10 33.500z" fill="#f3faf4" /><path d="M3.500 32.500l2-7A14.500 14.500 0 1 1 11 30.500z" fill="#3ec04d" /><g transform="translate(27 9) scale(-1 1)"><FaPhoneAlt size={18} color="#fff" /></g></svg>
          <Badge $bg="#4cc2ff" $fg="#10202b" $l={24} $w={40}>99+</Badge><Running />
        </TaskButton>
        <Tray>
          <Stroke w={18} h={12} d="M2 10l7-8 7 8" s={1.8} />
          <Cloud width="26" height="17" viewBox="0 0 26 17"><circle cx="13" cy="7" r="7" fill="#9d9d9d" /><path d="M6 17a5.500 5.500 0 0 1 0-10q3-1 6 2l11 4q0 4-4 4z" fill="#fff" /></Cloud>
          <Lang>ENG US</Lang>
          <Wifi size={25} c="#fff" />
          <Volume><Stroke w={36} h={20} d="M7 7h3.500l5-5v16l-5-5H7zM19 6q3 4 0 8M22.500 3.500q5 6.500 0 13" s={1.6} /></Volume>
          <svg width="25" height="16" viewBox="0 0 25 16"><rect x="1" y="1" width="20" height="14" rx="3" fill="none" stroke="#fff" strokeWidth="1.600" /><rect x="4" y="4" width="7" height="8" fill="#fff" /><path d="M23 5v6" stroke="#fff" strokeWidth="2.500" /></svg>
          <DateTime>5:35 AM<br />11/06/2023</DateTime>
          <Stroke w={22} h={24} d="M12 2Q3 2 3.500 11v5L1 19.500h18L16.500 17M8 20q2 4 4 0M8 8h5l-5 7h5M15 2h5l-5 6h5" s={1.6} />
        </Tray>
      </Taskbar>
    </Desktop>
  );
}
